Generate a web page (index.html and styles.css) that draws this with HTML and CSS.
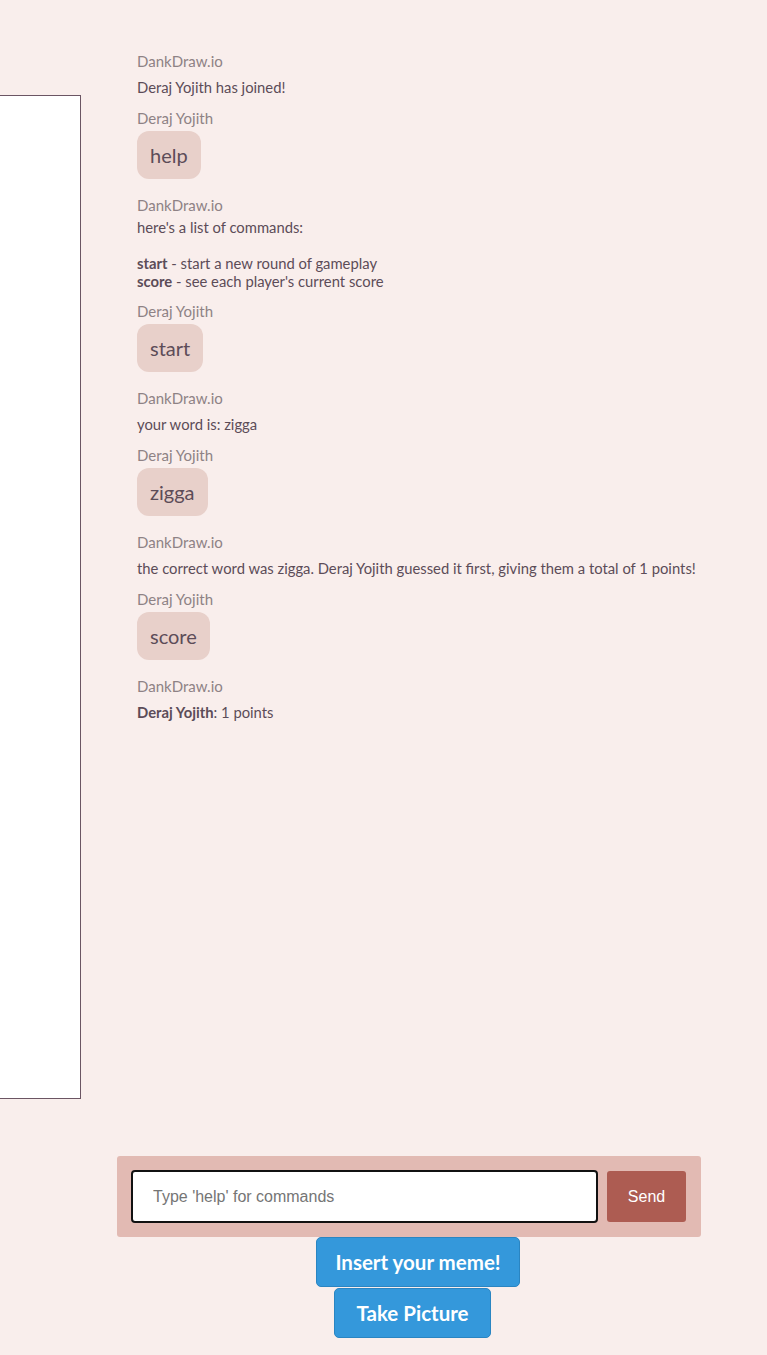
FILE: index.html
```html
<!DOCTYPE html>
<html>
<head>
<meta charset="utf-8">
<link rel="stylesheet" href="styles.css">
</head>
<body>
<div class="page">
  <div class="canvas-col">
    <div class="canvas"></div>
  </div>
  <div class="chat-col">
    <div class="messages">
      <div class="msg">
        <div class="name">DankDraw.io</div>
        <div class="text">Deraj Yojith has joined!</div>
      </div>
      <div class="msg">
        <div class="name">Deraj Yojith</div>
        <div class="bubble">help</div>
      </div>
      <div class="msg">
        <div class="name">DankDraw.io</div>
        <div class="text multi">here's a list of commands:<br><br><b>start</b> - start a new round of gameplay<br><b>score</b> - see each player's current score</div>
      </div>
      <div class="msg">
        <div class="name">Deraj Yojith</div>
        <div class="bubble">start</div>
      </div>
      <div class="msg">
        <div class="name">DankDraw.io</div>
        <div class="text">your word is: zigga</div>
      </div>
      <div class="msg">
        <div class="name">Deraj Yojith</div>
        <div class="bubble">zigga</div>
      </div>
      <div class="msg">
        <div class="name">DankDraw.io</div>
        <div class="text">the correct word was zigga. Deraj Yojith guessed it first, giving them a total of 1 points!</div>
      </div>
      <div class="msg">
        <div class="name">Deraj Yojith</div>
        <div class="bubble">score</div>
      </div>
      <div class="msg">
        <div class="name">DankDraw.io</div>
        <div class="text"><b>Deraj Yojith</b>: 1 points</div>
      </div>
    </div>
    <form class="composer">
      <input class="input" type="text" placeholder="Type 'help' for commands" autofocus>
      <button class="send" type="button">Send</button>
    </form>
    <div class="actions">
      <button class="blue meme" type="button">Insert your meme!</button>
      <button class="blue picture" type="button">Take Picture</button>
    </div>
  </div>
</div>
</body>
</html>
```

FILE: styles.css
```css
html, body {
  margin: 0;
  padding: 0;
  background: #f9eeec;
  height: 100%;
  overflow: hidden;
}

body {
  font-family: Lato, "Open Sans", sans-serif;
}

.page {
  display: flex;
  align-items: flex-start;
}

.canvas-col {
  flex: none;
  width: 500px;
  margin-left: -419px;
  padding-top: 95px;
}

.canvas {
  height: 1002px;
  background: #ffffff;
  border: 1px solid #6b5563;
}

.chat-col {
  flex: none;
  width: 584px;
  margin-left: 36px;
}

.messages {
  height: 1156px;
  box-sizing: border-box;
  padding: 51px 0 0 20px;
}

.msg {
  display: flex;
  flex-direction: column;
  align-items: flex-start;
  margin-bottom: 12px;
}

.name {
  font-size: 15px;
  line-height: 20px;
  color: #8e8285;
}

.text {
  margin-top: 6.5px;
  font-size: 14.8px;
  line-height: 18px;
  color: #5c4c58;
  white-space: nowrap;
}

.text.multi {
  margin-top: 3px;
  margin-bottom: -1.5px;
}

.text b {
  font-weight: 700;
}

.bubble {
  margin-top: 3px;
  margin-bottom: 4.5px;
  background: #e8d0ca;
  border-radius: 12px;
  padding: 0 13px;
  height: 48px;
  line-height: 48px;
  font-size: 20px;
  color: #5c4c58;
}

.composer {
  margin: 0;
  display: flex;
  align-items: center;
  gap: 9px;
  height: 81px;
  box-sizing: border-box;
  padding: 0 15px 0 14px;
  background: #e2bab3;
  border-radius: 3px;
}

.input {
  flex: 1;
  height: 53px;
  box-sizing: border-box;
  border: 2px solid #111111;
  border-radius: 4px;
  padding: 0 0 0 20px;
  font-family: "Liberation Sans", Arial, sans-serif;
  font-size: 16px;
  color: #333;
  background: #fff;
  outline: none;
}

.input::placeholder {
  color: #757575;
}

.send {
  flex: none;
  width: 79px;
  height: 51px;
  border: none;
  border-radius: 3px;
  background: #ad5c52;
  color: #ffffff;
  font-family: "Liberation Sans", Arial, sans-serif;
  font-size: 16px;
  padding: 0;
}

.actions {
  display: flex;
  flex-direction: column;
  align-items: flex-start;
  gap: 1px;
}

.blue {
  height: 50px;
  box-sizing: border-box;
  border: 1px solid #2a85c2;
  border-radius: 5px;
  background: #3498db;
  color: #ffffff;
  font-family: Lato, sans-serif;
  font-weight: 700;
  font-size: 20.5px;
  padding: 0;
}

.meme {
  margin-left: 199px;
  width: 204px;
}

.picture {
  margin-left: 217px;
  width: 157px;
}
```
